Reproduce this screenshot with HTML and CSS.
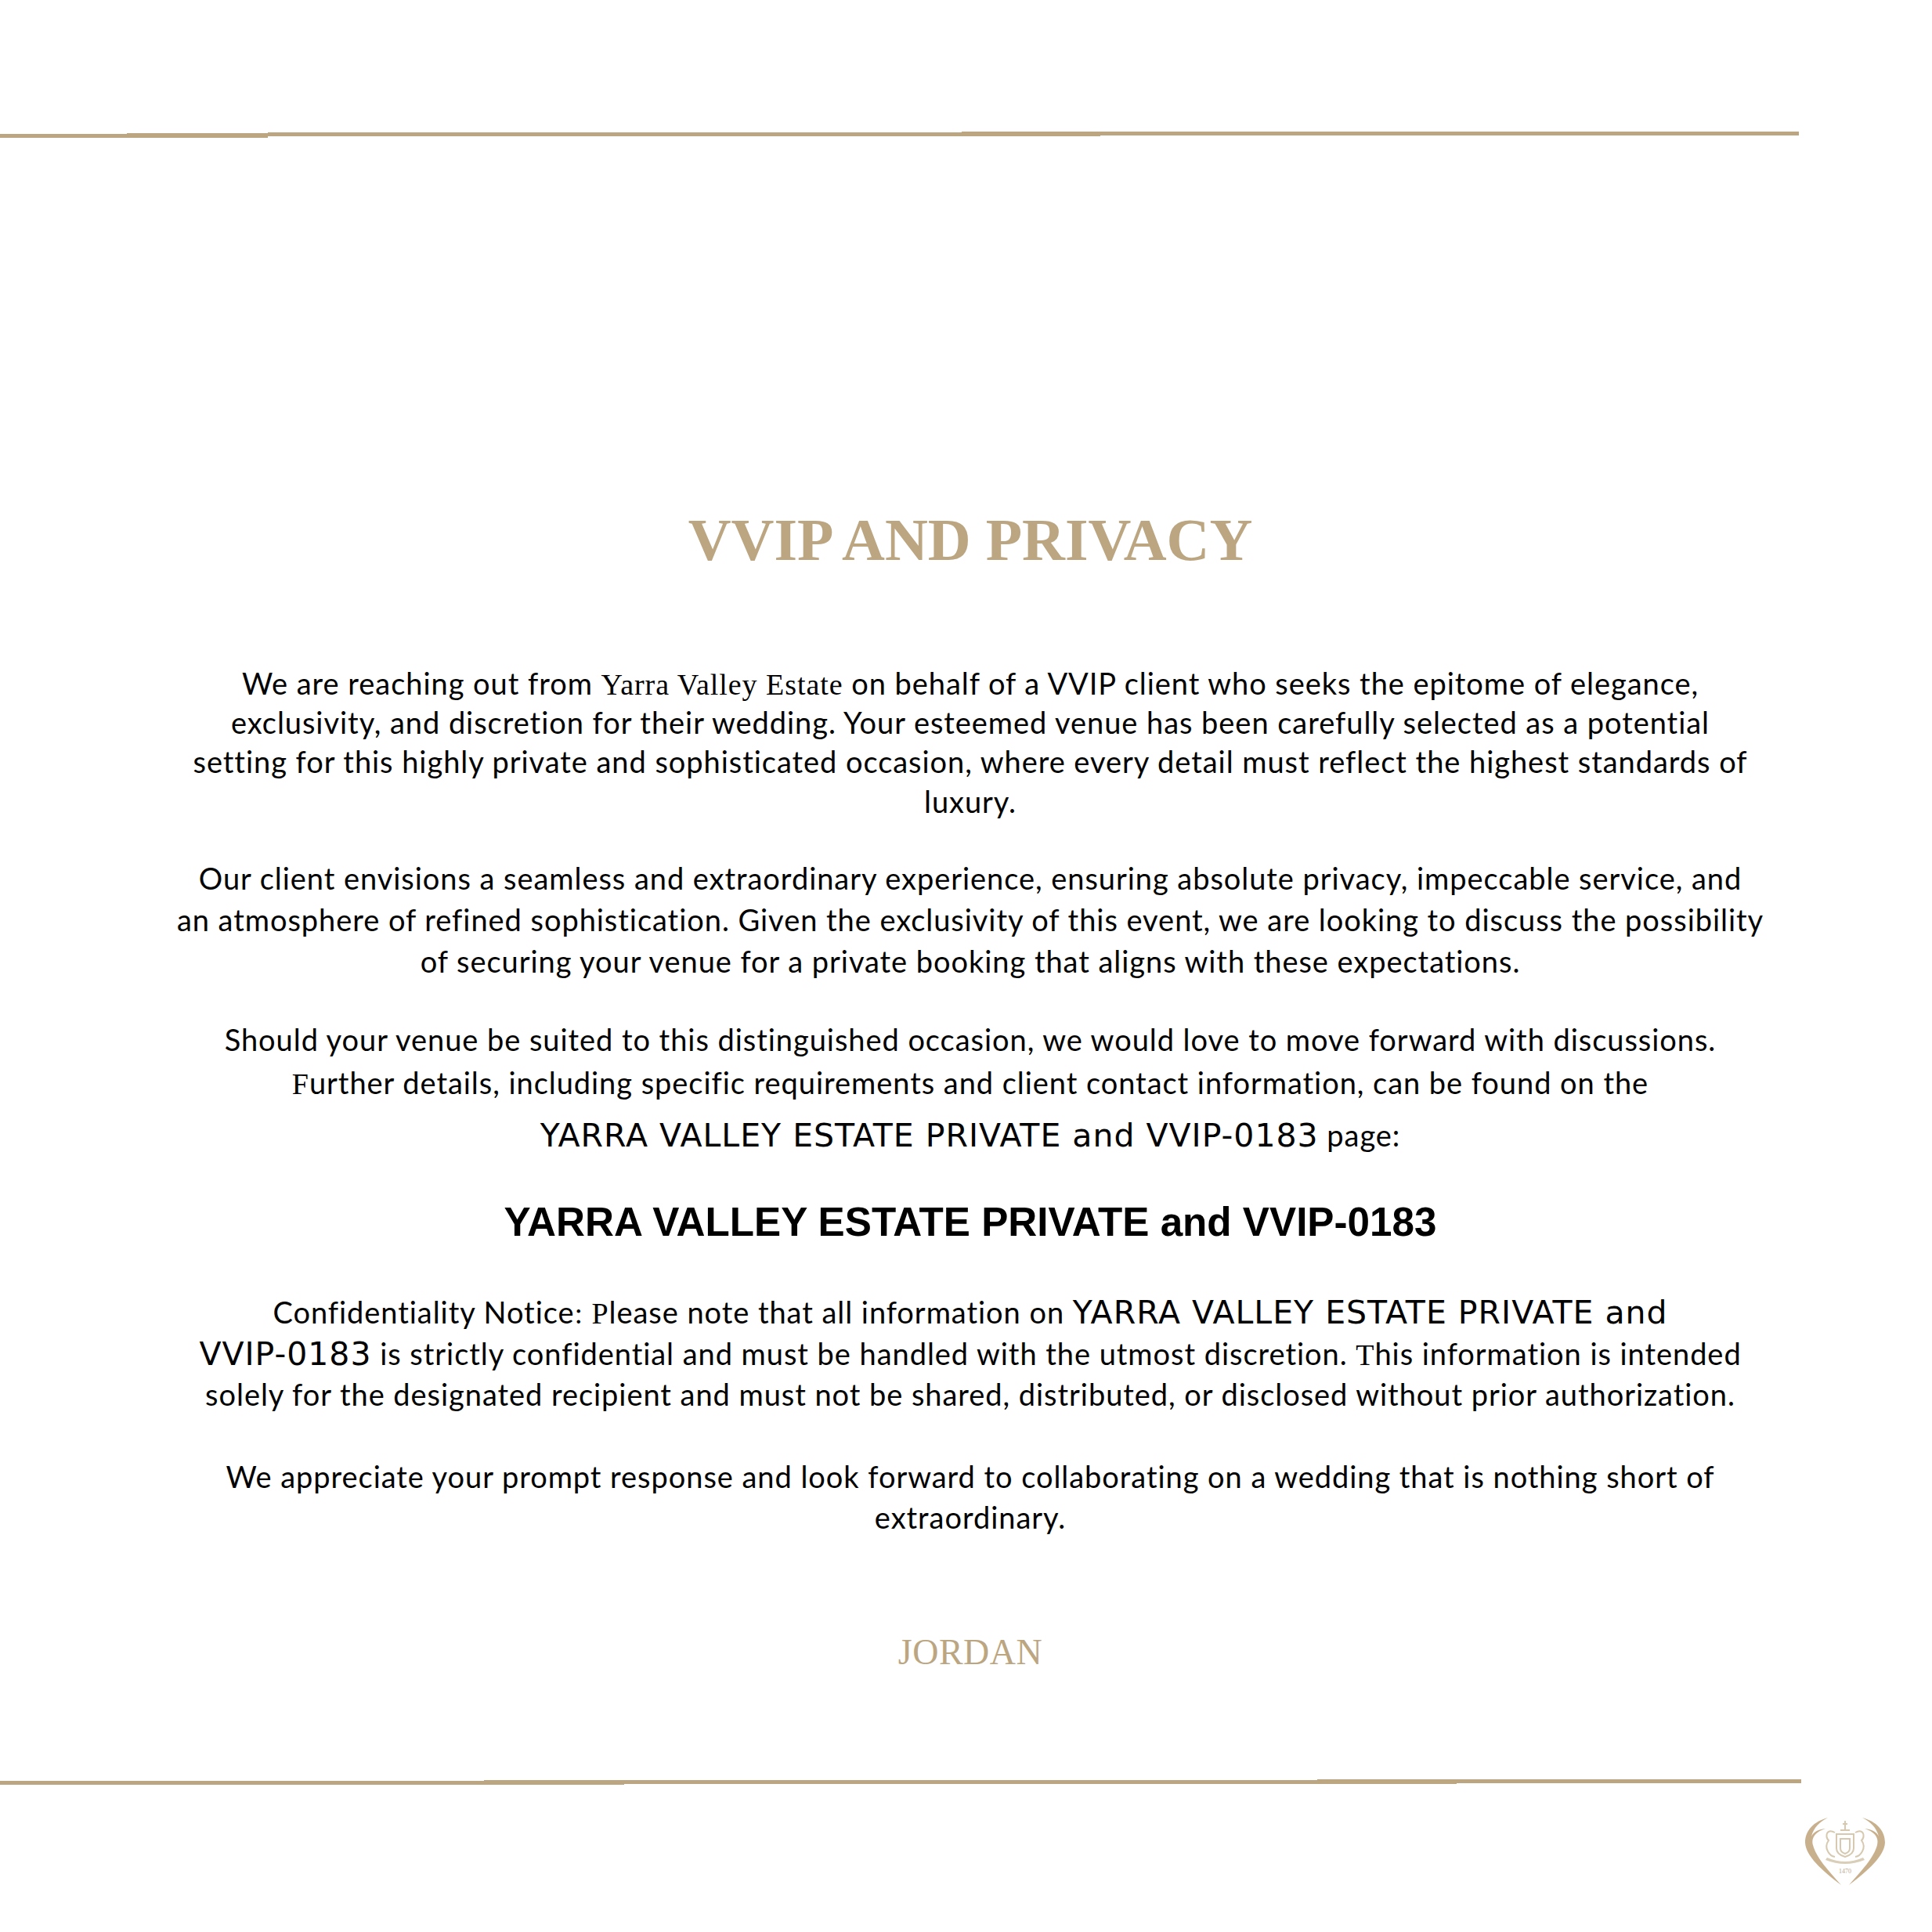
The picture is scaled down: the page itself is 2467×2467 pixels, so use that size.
FILE: index.html
```html
<!DOCTYPE html>
<html lang="en">
<head>
<meta charset="utf-8">
<title>VVIP and Privacy</title>
<link rel="stylesheet" href="styles.css">
</head>
<body>
<main class="page">
  <div class="rule rule-top">
    <span class="seg t1"></span><span class="seg t2"></span><span class="seg t3"></span><span class="seg t4"></span><span class="seg t5"></span>
  </div>
  <section class="content">
    <h1 class="title">VVIP AND PRIVACY</h1>
    <p class="para p1">
      <span class="ln">We are reaching out from <span class="sf">Yarra Valley Estate</span> on behalf of a VVIP client who seeks the epitome of elegance,</span>
      <span class="ln">exclusivity, and discretion for their wedding. Your esteemed venue has been carefully selected as a potential</span>
      <span class="ln">setting for this highly private and sophisticated occasion, where every detail must reflect the highest standards of</span>
      <span class="ln">luxury.</span>
    </p>
    <p class="para p2">
      <span class="ln">Our client envisions a seamless and extraordinary experience, ensuring absolute privacy, impeccable service, and</span>
      <span class="ln">an atmosphere of refined sophistication. Given the exclusivity of this event, we are looking to discuss the possibility</span>
      <span class="ln">of securing your venue for a private booking that aligns with these expectations.</span>
    </p>
    <p class="para p3">
      <span class="ln">Should your venue be suited to this distinguished occasion, we would love to move forward with discussions.</span>
      <span class="ln gap-s"><span class="sf">F</span>urther details, including specific requirements and client contact information, can be found on the</span>
      <span class="ln gap-l"><span class="vd">YARRA VALLEY ESTATE PRIVATE and VVIP-0183</span> page:</span>
    </p>
    <p class="ref">YARRA VALLEY ESTATE PRIVATE and VVIP-0183</p>
    <p class="para p4">
      <span class="ln">Confidentiality Notice<span class="sf">: P</span>lease note that all information on <span class="vd">YARRA VALLEY ESTATE PRIVATE and</span></span>
      <span class="ln"><span class="vd">VVIP-0183</span> is strictly confidential and must be handled with the utmost discretion. <span class="sf">T</span>his information is intended</span>
      <span class="ln">solely for the designated recipient and must not be shared, distributed, or disclosed without prior authorization.</span>
    </p>
    <p class="para p5">
      <span class="ln">We appreciate your prompt response and look forward to collaborating on a wedding that is nothing short of</span>
      <span class="ln">extraordinary.</span>
    </p>
    <p class="sign">JORDAN</p>
  </section>
  <div class="rule rule-bottom">
    <span class="seg b1"></span><span class="seg b2"></span><span class="seg b3"></span><span class="seg b4"></span><span class="seg b5"></span>
  </div>
  <svg class="crest" viewBox="0 0 104 88" aria-hidden="true">
    <path class="laurel" d="M30 1C12 6 1 17 1 33C2 50 22 68 47 87C32 70 15 52 11 36C9 28 12 20 27 15C17 16 11 20 9 25C12 13 20 6 30 1Z"/>
    <path class="laurel" d="M74 1C92 6 103 17 103 33C102 50 82 68 57 87C72 70 89 52 93 36C95 28 92 20 77 15C87 16 93 20 95 25C92 13 84 6 74 1Z"/>
    <g class="arms">
      <path d="M52 5v12M49 9h6M46 17h12"/>
      <path d="M41 22h22v18q0 8-11 11q-11-3-11-11Z"/>
      <path d="M46 28h12v12q0 5-6 7q-6-2-6-7Z"/>
      <path d="M39 20q-7-4-10 1q-2 5 2 9q-5 7-1 14q3 6 9 7M65 20q7-4 10 1q2 5-2 9q5 7 1 14q-3 6-9 7"/>
    </g>
    <path class="ribbon" d="M29 52q23 10 46 0l2 3q-25 10-50 0Z"/>
    <text class="crest-year" x="52" y="72" text-anchor="middle">1470</text>
  </svg>
</main>
</body>
</html>
```
FILE: styles.css
```css
html, body { margin: 0; padding: 0; background: #fff; }
.page { position: relative; width: 2467px; height: 2467px; overflow: hidden; padding-top: 168px; box-sizing: border-box; color: #000; font-family: "Lato", "Liberation Sans", sans-serif; }
.rule { display: flex; align-items: flex-start; height: 8px; }
.rule-top { width: 2297px; }
.rule-bottom { width: 2300px; }
.seg { display: block; background: #bca681; }
.t1 { width: 162px; height: 5px; margin-top: 3px; }
.t2 { width: 180px; height: 6px; margin-top: 2px; }
.t3 { width: 886px; height: 5px; margin-top: 1px; }
.t4 { width: 177px; height: 6px; }
.t5 { flex: 1; height: 5px; }
.b1 { width: 618px; height: 5px; margin-top: 2px; }
.b2 { width: 179px; height: 6px; margin-top: 1px; }
.b3 { width: 885px; height: 5px; margin-top: 1px; }
.b4 { width: 178px; height: 6px; }
.b5 { flex: 1; height: 5px; margin-top: 0; }
.content { width: 2478px; height: 2096px; text-align: center; }
.title { margin: 0; padding-top: 475px; font: 700 76px/1 "Liberation Serif", serif; color: #bca681; }
.para { margin: 0; font-size: 38px; font-weight: 400; letter-spacing: 0.95px; }
.ln { display: block; white-space: nowrap; }
.sf { font-family: "Liberation Serif", serif; font-weight: 400; line-height: 1; }
.vd { font-family: "DejaVu Sans", sans-serif; font-weight: 400; font-size: 41px; letter-spacing: 1px; line-height: 1; }
.p1 { margin-top: 119.5px; line-height: 50.4px; }
.p2 { margin-top: 47px; line-height: 53px; }
.p3 { margin-top: 47px; line-height: 53px; }
.gap-s { margin-top: 2px; }
.gap-l { margin-top: 13.5px; }
.ref { margin: 55px 0 0; font: 700 51.2px/60px "Liberation Sans", sans-serif; }
.p4 { margin-top: 58.5px; line-height: 52.5px; }
.p5 { margin-top: 52px; line-height: 52px; }
.sign { margin: 124.5px 0 0; font: 400 46px/1 "Liberation Serif", serif; letter-spacing: 0.5px; color: #bca681; }
.crest { position: absolute; left: 2304px; top: 2320px; width: 104px; height: 88px; }
.laurel { fill: #c9b08c; }
.arms { fill: none; stroke: #d6c9b0; stroke-width: 2; }
.ribbon { fill: #d9ceb8; }
.crest-year { font: 8px "Liberation Serif", serif; fill: #b9a98e; }
```
